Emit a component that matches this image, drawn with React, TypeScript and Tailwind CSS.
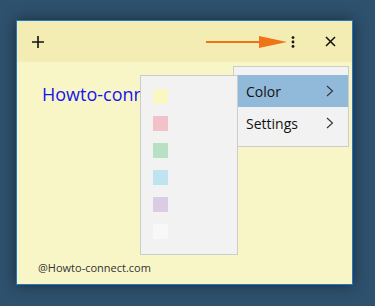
import React from "react";

const swatches = ["#fbf7c4", "#f2c2cb", "#b9dfc4", "#bde4f0", "#d9cce4", "#f8f8f8"];

function Chevron() {
  return (
    <svg width="8" height="12" viewBox="0 0 8 12" className="text-[#333]">
      <path d="M1 1l5.5 5L1 11" fill="none" stroke="currentColor" strokeWidth="1.1" />
    </svg>
  );
}

export default function App() {
  return (
    <div
      className="h-[306px] w-[375px] overflow-hidden bg-[#2e516e] pl-[16px] pt-[20px]"
      style={{ fontFamily: '"Open Sans", "Noto Sans", sans-serif' }}
    >
      <div className="relative flex h-[265px] w-[337px] flex-col border border-[#1f77c6] bg-[#f8f6c7] shadow-[0_0_14px_rgba(0,0,0,0.45)]">
        {/* title bar */}
        <div className="flex h-[41px] items-center bg-[#f3edb3] pl-[14px] pr-[16px]">
          <svg width="14" height="14" viewBox="0 0 14 14">
            <path d="M7 1v12M1 7h12" stroke="#111" strokeWidth="1.6" />
          </svg>
          <div className="flex-1" />
          <svg width="82" height="14" viewBox="0 0 82 14">
            <path d="M0 7h60" stroke="#f07318" strokeWidth="2.2" />
            <path d="M53 1l28 6-28 6z" fill="#f07318" />
          </svg>
          <svg width="4" height="12" viewBox="0 0 4 12" className="ml-[3px]">
            <circle cx="2" cy="1.6" r="1.4" fill="#111" />
            <circle cx="2" cy="6" r="1.4" fill="#111" />
            <circle cx="2" cy="10.4" r="1.4" fill="#111" />
          </svg>
          <svg width="11" height="11" viewBox="0 0 11 11" className="ml-[30px]">
            <path d="M1 1l9 9M10 1l-9 9" stroke="#111" strokeWidth="1.5" />
          </svg>
        </div>

        {/* body */}
        <div className="flex flex-1 flex-col justify-between pb-[9px] pl-[25px] pt-[20px]">
          <div className="text-[18px] leading-[24px] text-[#1414f0]">Howto-connect.com</div>
          <div className="-ml-[4px] text-[11px] leading-[14px] text-[#333]">@Howto-connect.com</div>
        </div>

        {/* main menu */}
        <div className="absolute left-[216px] top-[45px] w-[116px] border border-[#cccccc] bg-[#f2f2f2] pb-[7px] pt-[8px] text-[14px] text-[#111]">
          <div className="ml-[3px] flex h-[32px] items-center justify-between bg-[#91b9d9] pl-[9px] pr-[14px]">
            <span>Color</span>
            <Chevron />
          </div>
          <div className="flex h-[32px] items-center justify-between pl-[12px] pr-[14px]">
            <span>Settings</span>
            <Chevron />
          </div>
        </div>

        {/* color submenu */}
        <div className="absolute left-[123px] top-[54px] flex h-[180px] w-[98px] flex-col gap-[12px] border border-[#cccccc] bg-[#f2f2f2] pl-[12px] pt-[13px]">
          {swatches.map((c) => (
            <div key={c} className="h-[15px] w-[15px]" style={{ backgroundColor: c }} />
          ))}
        </div>
      </div>
    </div>
  );
}
